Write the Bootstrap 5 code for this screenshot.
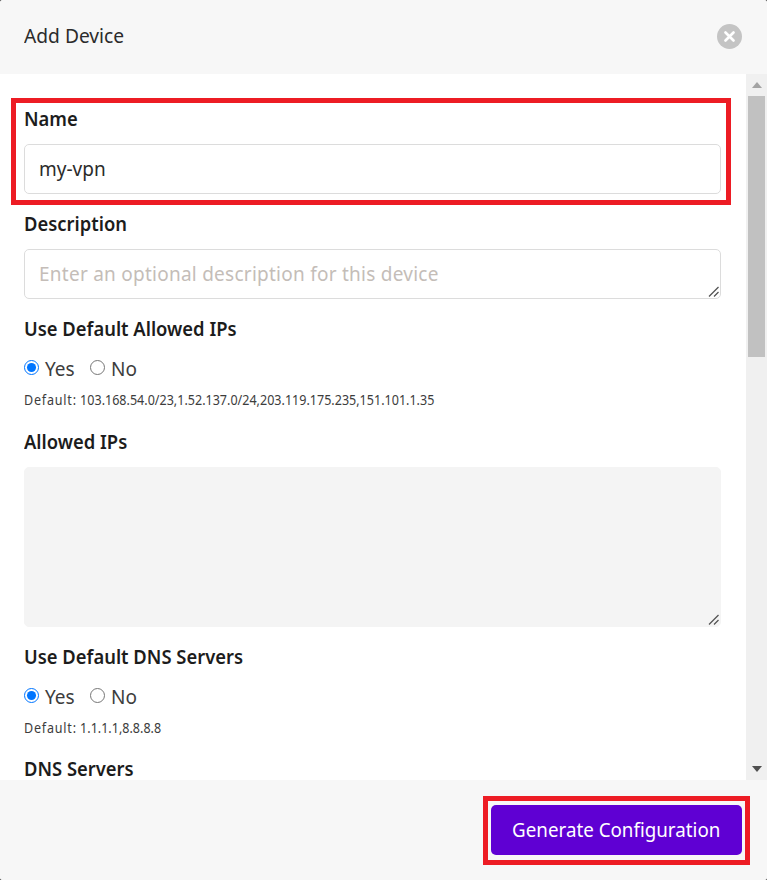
<!DOCTYPE html>
<html lang="en">
<head>
<meta charset="utf-8">
<title>Add Device</title>
<link href="https://cdn.jsdelivr.net/npm/bootstrap@5.3.0/dist/css/bootstrap.min.css" rel="stylesheet">
<style>
html,body{height:100%;margin:0;background:#555;overflow:hidden}
body{font-family:"Noto Sans","Open Sans",sans-serif;color:#212529}
.dlg{width:767px;height:880px;display:flex;flex-direction:column;background:#fff;border-radius:3px;overflow:hidden}
.dlg-head{height:74px;flex:none;background:#f7f7f7;padding:0 25px 2px 24px;color:#2b2b2b}
.dlg-title{font-size:20px;transform:scaleX(.96);transform-origin:left center}
.close-x{width:25px;height:25px;border-radius:50%;background:#c4c4c4;border:0;padding:0;display:flex;align-items:center;justify-content:center}
.dlg-mid{height:706px;flex:none;display:flex;overflow:hidden}
.dlg-scroll{flex:1 1 auto;min-width:0;overflow:hidden;padding:32px 25px 0 24px}
.sbar{width:21px;flex:none;background:#f0f0f0;display:flex;flex-direction:column}
.sbar-arrow{height:22px;flex:none;display:flex;align-items:center;justify-content:center}
.sbar-thumb{height:261px;background:#c1c1c1;width:17px;margin-left:2px}
.sbar-gap{flex:1 1 auto}
.fld{position:relative}
.flabel{display:block;font-weight:600;font-size:19px;line-height:26px;margin:0 0 12px;color:#1c1c1c;transform:scaleX(.968);transform-origin:left center;white-space:nowrap}
.finput.form-control{height:50px;font-size:19px;padding:0 14px;border:1px solid #dcdcdc;border-radius:5px;color:#2b2b2b;line-height:48px;box-shadow:none}
.finput.form-control::placeholder{color:#c4bdb8;opacity:1;letter-spacing:.25px}
textarea.finput.form-control{min-height:50px;resize:none}
.tall.form-control{height:160px;background:#f4f4f4;border-color:#f4f4f4}
.grip{position:absolute;right:2px;bottom:2px;width:11px;height:11px}
.radios{display:flex;align-items:center;font-size:19px;line-height:26px;height:26px;margin-top:14px;color:#3d3d3d}
.flabel.flabel-r{margin-bottom:0}
.radios .form-check-input{width:15px;height:15px;margin:0 6px 4px 0;border:1px solid #767676;flex:none}
.radios .form-check-input:checked{border:1.5px solid #0075ff;background-color:#fff;background-image:url("data:image/svg+xml,%3csvg xmlns='http://www.w3.org/2000/svg' viewBox='-4 -4 8 8'%3e%3ccircle r='2.8' fill='%230075ff'/%3e%3c/svg%3e");background-size:100% 100%}
.radios label{margin-right:14px;width:31px}
.hint{font-size:13.5px;line-height:20px;margin-top:8px;color:#3d3d3d;transform:scaleX(.93);transform-origin:left center;white-space:nowrap}
.hint-key{letter-spacing:.85px}
.dlg-foot{flex:1 1 auto;background:#f7f7f7;display:flex;justify-content:flex-end;align-items:flex-start;padding:25px 25px 0 0}
.gen-btn.btn{position:relative;width:251px;height:50px;background:#5f00d3;border:0;border-radius:5px;color:#fff;font-size:19.5px;padding:0;white-space:nowrap}
.gen-text{display:inline-block;transform:scaleX(.962)}
.mark-box{position:absolute;border:5px solid #ed1c24;pointer-events:none}
.mark-name{left:-13px;right:-10px;top:-8px;bottom:-11px}
.mark-gen{left:-8px;right:-8px;top:-9px;bottom:-10px}
.gap-17{margin-bottom:17px}
.gap-19{margin-bottom:19px}
.gap-18{margin-bottom:18px}
</style>
</head>
<body>
<div class="dlg">
  <header class="dlg-head d-flex align-items-center justify-content-between">
    <div class="dlg-title">Add Device</div>
    <button class="close-x" type="button" aria-label="Close">
      <svg width="11" height="11" viewBox="0 0 11 11"><path d="M1.5 1.5l8 8M9.5 1.5l-8 8" stroke="#fff" stroke-width="2.6" stroke-linecap="round"/></svg>
    </button>
  </header>
  <div class="dlg-mid">
    <form class="dlg-scroll">
      <div class="fld gap-17">
        <label class="flabel">Name</label>
        <input class="form-control finput" type="text" value="my-vpn">
        <div class="mark-box mark-name"></div>
      </div>
      <div class="fld gap-17">
        <label class="flabel">Description</label>
        <textarea class="form-control finput" placeholder="Enter an optional description for this device"></textarea>
        <svg class="grip" viewBox="0 0 11 11"><path d="M1 10.5L10.5 1M6 10.5L10.5 6" stroke="#555" stroke-width="1.3" fill="none"/></svg>
      </div>
      <div class="fld gap-19">
        <label class="flabel flabel-r">Use Default Allowed IPs</label>
        <div class="radios">
          <input class="form-check-input" type="radio" name="a" checked><label>Yes</label>
          <input class="form-check-input" type="radio" name="a"><label>No</label>
        </div>
        <div class="hint"><span class="hint-key">Default:</span> 103.168.54.0/23,1.52.137.0/24,203.119.175.235,151.101.1.35</div>
      </div>
      <div class="fld gap-17">
        <label class="flabel">Allowed IPs</label>
        <textarea class="form-control finput tall"></textarea>
        <svg class="grip" viewBox="0 0 11 11"><path d="M1 10.5L10.5 1M6 10.5L10.5 6" stroke="#555" stroke-width="1.3" fill="none"/></svg>
      </div>
      <div class="fld gap-18">
        <label class="flabel flabel-r">Use Default DNS Servers</label>
        <div class="radios">
          <input class="form-check-input" type="radio" name="b" checked><label>Yes</label>
          <input class="form-check-input" type="radio" name="b"><label>No</label>
        </div>
        <div class="hint"><span class="hint-key">Default:</span> 1.1.1.1,8.8.8.8</div>
      </div>
      <div class="fld">
        <label class="flabel">DNS Servers</label>
      </div>
    </form>
    <div class="sbar" aria-hidden="true">
      <div class="sbar-arrow"><svg width="10" height="6" viewBox="0 0 10 6"><path d="M0 6L5 0l5 6z" fill="#a3a3a3"/></svg></div>
      <div class="sbar-thumb"></div>
      <div class="sbar-gap"></div>
      <div class="sbar-arrow"><svg width="10" height="6" viewBox="0 0 10 6"><path d="M0 0l5 6 5-6z" fill="#505050"/></svg></div>
    </div>
  </div>
  <footer class="dlg-foot">
    <button class="btn gen-btn" type="button"><span class="gen-text">Generate Configuration</span><span class="mark-box mark-gen"></span></button>
  </footer>
</div>
</body>
</html>
